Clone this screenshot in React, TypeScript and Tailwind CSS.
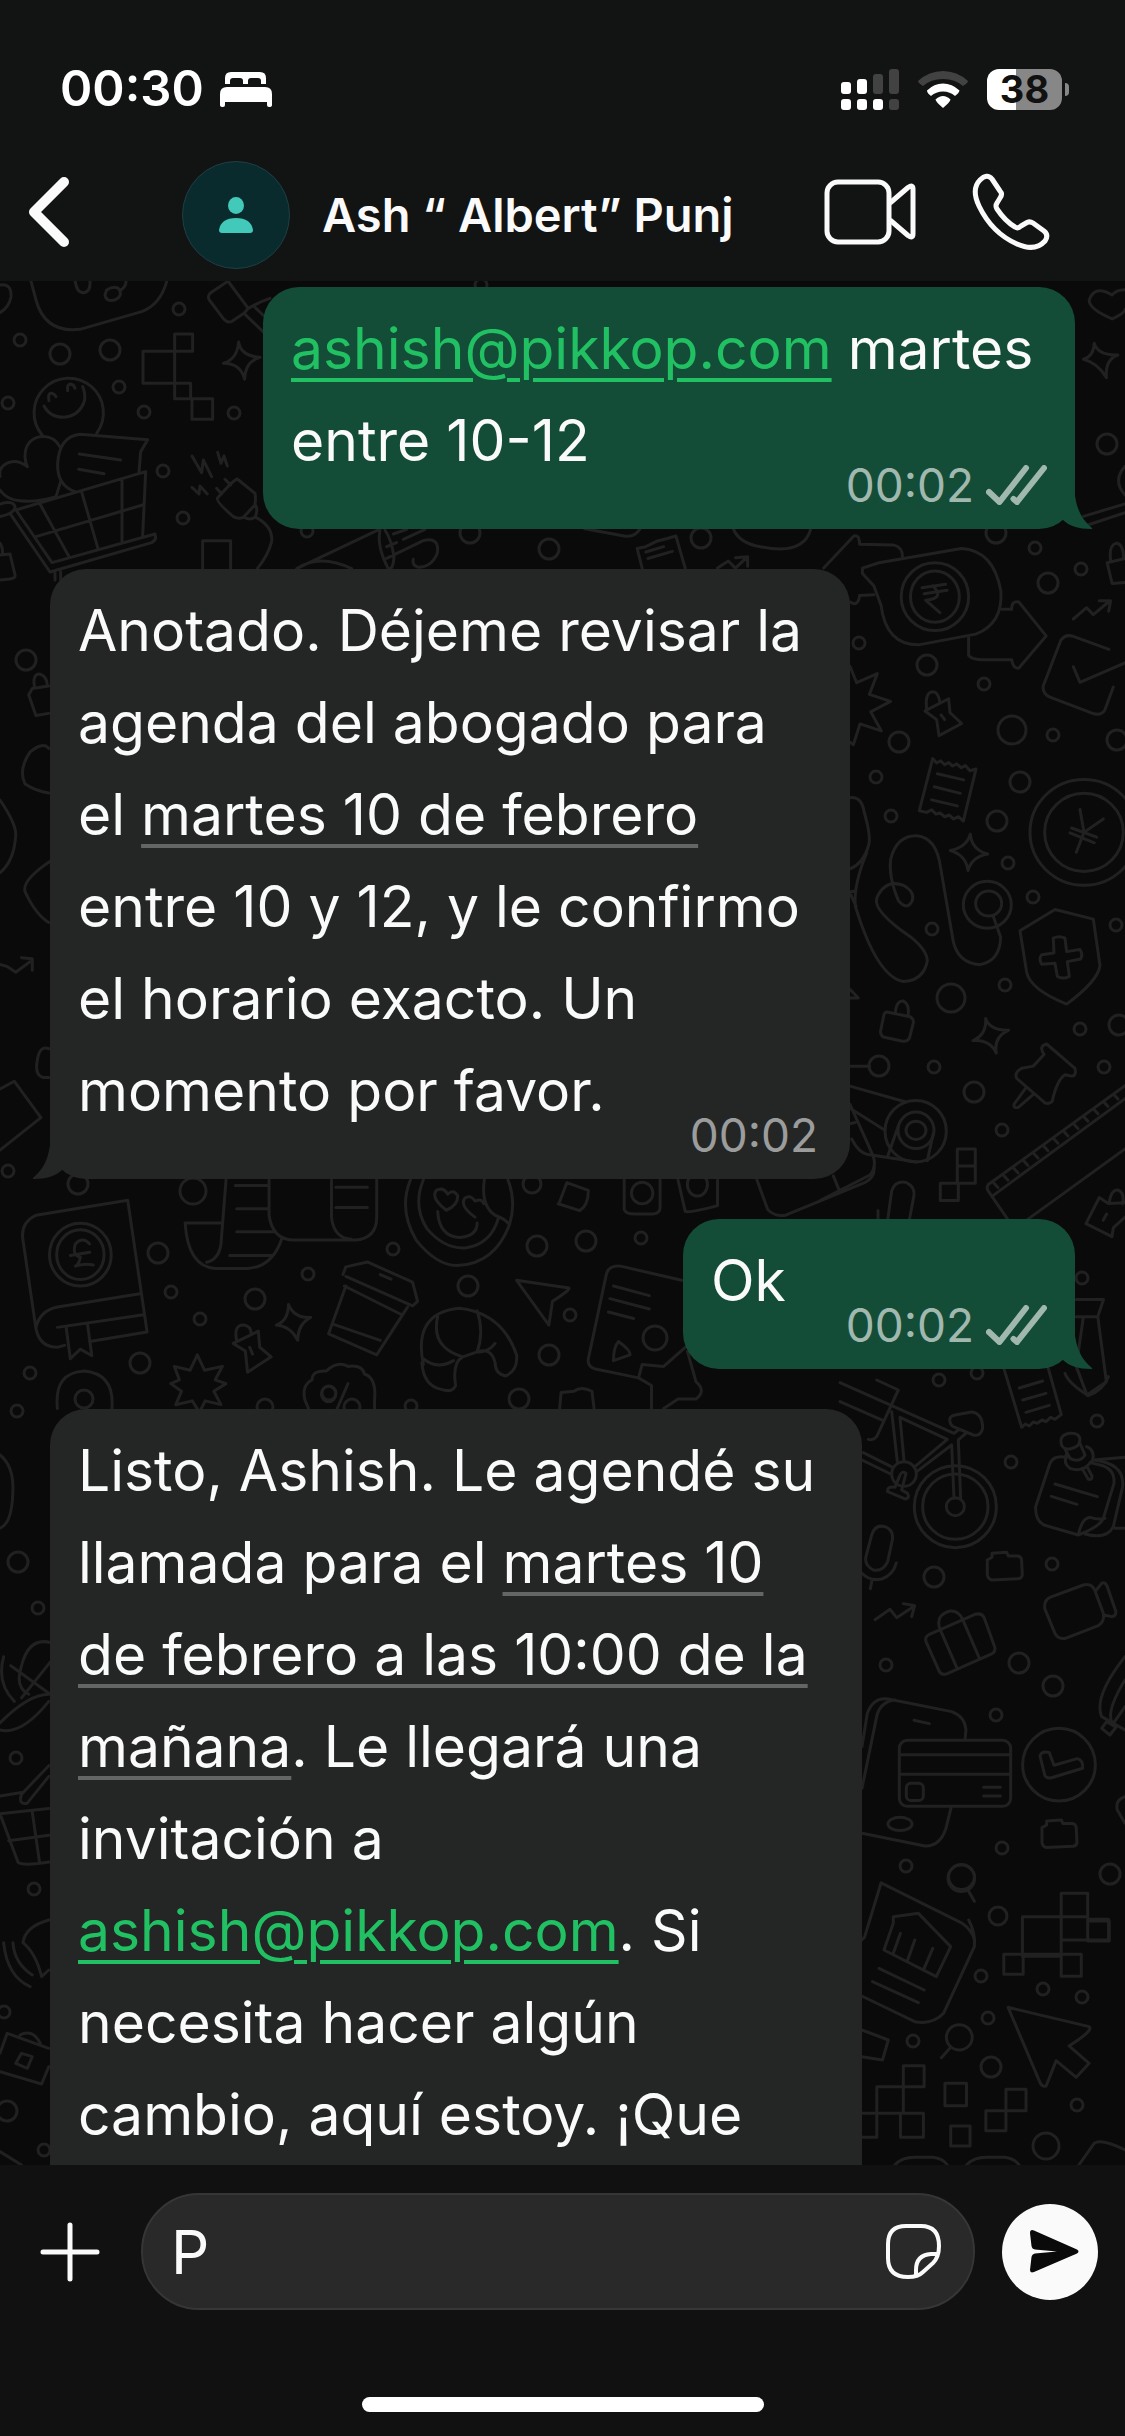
import type { ReactNode } from 'react'

// x, y, radius
const dots = [
  [179, 309, 6], [20, 340, 6], [119, 387, 6], [144, 412, 6], [8, 403, 6], [234, 413, 6], [163, 471, 6],
  [183, 518, 6], [481, 285, 6], [60, 354, 10], [110, 350, 10], [470, 533, 10], [307, 531, 6], [1107, 444, 10],
  [996, 533, 10], [1035, 548, 6], [549, 549, 10], [701, 538, 10], [1081, 569, 6], [859, 643, 6], [984, 684, 6],
  [1053, 735, 6], [876, 777, 6], [891, 816, 6], [1008, 863, 6], [1033, 897, 6], [932, 929, 6], [1116, 925, 6],
  [1005, 985, 6], [1080, 1029, 6], [934, 1067, 6], [1104, 1067, 6], [1002, 1130, 6], [927, 665, 10],
  [899, 742, 10], [1048, 583, 10], [1020, 782, 10], [997, 821, 10], [1117, 740, 10], [974, 1092, 10],
  [1119, 1025, 10], [879, 1066, 10], [1012, 730, 14], [951, 998, 14], [26, 660, 10], [8, 1171, 6],
  [78, 1184, 10], [193, 1191, 13], [393, 1249, 6], [158, 1253, 10], [308, 1274, 6], [171, 1292, 6],
  [255, 1299, 10], [200, 1319, 6], [468, 1286, 10], [537, 1246, 10], [586, 1241, 10], [641, 1238, 6],
  [570, 1315, 6], [549, 1355, 10], [655, 1338, 12], [140, 1363, 10], [30, 1373, 6], [532, 1184, 9],
  [1082, 1278, 6], [939, 1380, 6], [977, 1373, 6], [17, 1411, 6], [329, 1393, 7], [519, 1399, 10],
  [265, 1407, 8], [352, 1407, 8], [411, 1406, 6], [84, 1399, 9], [18, 1562, 10], [38, 1608, 6], [16, 1758, 6],
  [34, 1889, 6], [1097, 1421, 6], [1011, 1462, 6], [1052, 1564, 6], [886, 1665, 6], [996, 1715, 6],
  [1002, 1848, 6], [906, 1866, 6], [934, 1577, 10], [1019, 1663, 10], [1053, 1686, 10], [1110, 1874, 10],
  [981, 1976, 6], [1043, 1989, 6], [1082, 1997, 6], [913, 2041, 6], [988, 2018, 6], [1077, 2105, 6],
  [4, 2012, 6], [44, 2150, 6], [991, 2067, 10], [1046, 2146, 13], [7, 2111, 10], [998, 1916, 9],
]

const folder =
  'M442 540L456 532V520L500 517L505 528L535 528Q546 532 545 545L547 585Q545 595 535 596L455 600Q443 596 442 585Z'

function Wallpaper() {
  return (
    <svg
      aria-hidden="true"
      viewBox="0 281 1125 1884"
      preserveAspectRatio="xMidYMin slice"
      className="absolute inset-0 h-full w-full fill-none stroke-[#212121] stroke-3 [&_*]:[vector-effect:non-scaling-stroke]"
      strokeLinecap="round"
      strokeLinejoin="round"
    >
      {dots.map(([x, y, r]) => (
        <circle key={`${x}-${y}`} cx={x} cy={y} r={r} />
      ))}

      {/* shopping cart, hammer, plug, megaphone */}
      <g transform="translate(0 280) scale(.3333)">
        <path d="M92 0L108 60Q135 160 240 148L425 95Q480 75 500 5M225 0Q230 40 252 38Q272 34 270 5M320 30Q345 15 358 28Q368 50 345 60Q318 66 315 45ZM360 32Q378 20 378 5M0 15Q35 10 33 50Q28 80 0 98" />
        <path d="M680 6L630 40Q622 50 628 60L672 118Q682 130 696 124L732 100L745 85L686 6M732 100L789 155M765 82L789 105M745 85Q780 65 810 55" />
        <path d="M429 214H524V310H429ZM524 162H578V214H524ZM524 310H572V356H524ZM576 356H638V418H576ZM608 866V782H692V866" />
        <path d="M716 186Q722 228 780 232Q735 245 734 298Q722 250 670 250Q712 238 716 186Z" />
        <path d="M128 467A104 104 0 1 1 290 460M132 378Q150 412 190 412Q240 408 254 360Q256 338 248 320M147 362Q142 338 156 340Q164 342 168 350M203 332Q200 312 212 312Q222 314 225 325" />
        <path d="M180 500Q160 465 120 470Q75 480 75 530Q76 548 82 560Q50 535 20 550Q-5 562 0 590M0 630Q20 660 60 662Q110 668 168 650L182 605" />
        <path d="M225 635Q170 615 173 550Q178 470 240 463L443 479L422 515L417 578M238 522L362 540M236 568L312 581" />
        <path d="M48 690L437 575L428 768M48 690L156 848L465 762M30 700L150 876L455 788Q472 778 465 765M120 672L208 832M245 636L294 806M366 596V788M108 770L428 675M0 710Q45 700 45 680Q40 660 0 672M165 880V900M182 875V900" />
        <path d="M0 825L30 822L45 885Q47 895 30 897L0 900M0 790Q8 800 8 822" />
        <path d="M576 528L605 578L610 540L635 590M653 517L663 550L672 528L682 558M576 622L597 642L600 618L622 642" />
        <path d="M712 597Q700 600 652 655Q648 665 700 710Q715 718 730 712L765 675Q768 650 765 640ZM675 598L692 615M650 625L665 642M732 712Q750 722 765 712Q776 690 765 672M768 712Q820 740 815 785Q805 825 772 866" />
        <path d="M890 866L1135 750M890 866Q960 820 1055 866M1140 750Q1130 800 1165 866Q1180 870 1182 830Q1175 780 1155 750M1160 800L1190 788M1160 835L1270 782Q1320 770 1312 820Q1295 862 1255 862Q1235 855 1240 838M1180 762L1220 748M1210 778L1275 748" />
      </g>

      {/* coin bubble, arrow, receipt */}
      <g transform="translate(0 270) scale(.7175 .357)">
        <path d="M1550 70Q1525 40 1518 85Q1518 110 1550 137Q1568 120 1568 110M1550 70Q1555 55 1568 55M1525 205Q1530 240 1558 238Q1540 250 1542 302Q1530 260 1510 250Q1525 240 1525 205Z" />
        <path d="M955 835L942 745L930 752L915 760L900 775L888 780L895 835M900 790L925 775M903 808L937 788M1000 835L1015 815L1025 835L1042 803M1025 806L1042 803V830" />
        <path d="M1022 725Q1030 765 1060 775Q1120 800 1130 725M815 725L870 745Q885 750 892 725M1510 690L1568 655M1515 715L1568 680M1148 835L1190 745Q1198 740 1198 768L1245 770Q1258 775 1258 805" />
        <path d="M1202 835L1225 820L1340 780Q1385 785 1395 900Q1398 990 1360 1020L1280 1050Q1235 1050 1228 940L1218 885L1202 850Z" />
        <ellipse cx="1303" cy="915" rx="47" ry="95" />
        <ellipse cx="1303" cy="915" rx="34" ry="72" />
        <path d="M1285 890L1318 880M1288 907L1320 897M1300 885Q1318 920 1290 925L1310 960" />
        <path d="M1350 1030V1080Q1355 1092 1370 1092L1410 1092Q1412 1118 1420 1115L1458 1025L1420 930Q1410 925 1410 950H1396M1185 930Q1196 945 1198 912L1218 910" />
        <path d="M1568 875L1550 878L1543 820L1568 808M1548 815Q1545 770 1556 765Q1566 768 1566 808M1568 550Q1550 590 1568 630" />
        <path d="M68 1165L45 1172L40 1190L50 1248L68 1242M48 1168Q45 1130 56 1132Q66 1140 66 1165M68 1340Q60 1320 42 1350Q25 1400 35 1440Q50 1460 68 1465" />
      </g>

      {/* stethoscope, shield, pin, ruler */}
      <g transform="translate(820 560) scale(.3333 .4337)">
        <path d="M760 136L800 110L820 126L870 94M838 94H872L866 118M867 206L760 176Q735 170 722 186L670 290Q666 308 690 316L820 354Q845 360 855 345L880 293M760 246L780 282L915 237" />
        <path d="M90 245L110 283L172 262L148 310L212 326L152 350L184 394L120 378L100 426L90 420" />
        <path d="M320 344Q314 305 338 304Q356 304 360 330M315 348L386 320L390 352L425 377L357 405L350 368ZM363 357L374 368" />
        <path d="M338 458L350 468L362 463L374 472L386 467L398 475L410 470L424 479L436 474L450 486L468 482L430 602L416 592L400 597L388 588L374 592L360 583L348 586L335 576L320 582L298 578ZM352 493L431 507M343 523L421 538M335 553L412 567" />
        <ellipse cx="792" cy="628" rx="162" ry="122" />
        <ellipse cx="792" cy="628" rx="118" ry="90" />
        <path d="M780 575L792 628L850 597M792 628L769 674M755 618L830 639M750 629L823 652" />
        <path d="M451 632Q455 668 503 678Q455 685 444 716Q438 680 391 670Q440 662 451 632ZM497 1057Q510 1085 566 1084Q520 1100 529 1137Q510 1105 459 1108Q500 1095 497 1057Z" />
        <path d="M90 548Q125 545 132 580Q155 640 145 660Q130 700 90 712M90 765L108 763M90 768L108 798M140 675Q100 750 106 798Q170 960 250 972Q310 970 322 925Q322 900 270 868Q160 810 170 780Q195 735 250 750Q285 765 277 785Q262 810 235 785Q205 730 212 690Q230 635 290 636Q350 640 362 710L400 880Q415 930 480 933Q540 925 542 870L520 822" />
        <ellipse cx="502" cy="795" rx="72" ry="54" />
        <ellipse cx="506" cy="792" rx="39" ry="29" />
        <path d="M600 855L705 806L820 828L840 935Q835 970 740 1024Q630 990 620 950Z" />
        <path d="M700 872Q718 865 735 872L740 903L780 898Q790 910 782 920L742 926L748 960Q730 968 712 960L705 930L665 932Q655 920 665 910L702 906Z" />
        <path d="M200 1042L270 1053Q282 1058 280 1068L268 1103Q260 1112 245 1109L190 1100Q180 1095 182 1085L192 1048Q195 1042 200 1042M226 1043Q230 1015 250 1017Q270 1025 264 1050" />
        <path d="M672 1140Q655 1120 680 1116L765 1172Q770 1190 755 1190L735 1187Q710 1200 697 1248Q690 1255 675 1252L590 1195Q582 1182 605 1172L640 1167ZM620 1215L582 1255Q580 1265 595 1262L640 1232" />
        <path d="M915 1212L505 1440Q498 1448 505 1455L565 1522M915 1242L520 1465M915 1358L620 1522M522 1437l12 10m18-27l12 10m18-27l12 10m18-27l12 10m18-27l12 10m18-27l12 10m18-27l12 10m18-27l12 10m18-27l12 10m18-27l12 10m18-27l12 10m18-27l12 10m18-27l12 10" />
        <path d="M90 1213L255 1249M90 1264L195 1315M235 1305L203 1375M340 1322L322 1385M95 1335Q115 1365 140 1370L290 1388" />
        <ellipse cx="287" cy="1317" rx="92" ry="71" />
        <ellipse cx="288" cy="1315" rx="54" ry="42" />
        <ellipse cx="288" cy="1315" rx="30" ry="21" />
        <path d="M90 1255L160 1375Q170 1400 150 1418L0 1477M40 1420L58 1454M90 1300L105 1297M90 990L115 1010H90M90 1167H149" />
        <path d="M412 1358H466V1437H412ZM412 1397H466M361 1437H415V1477H361Z" />
        <path d="M203 1522L215 1455Q225 1430 258 1435Q285 1445 282 1465L268 1522M174 1500V1522" />
        <path d="M868 1480Q875 1450 895 1453Q915 1460 908 1485M798 1530L838 1470L865 1484L915 1482M798 1530L876 1560L880 1540L915 1515M850 1522L860 1508" />
      </g>

      {/* book, scroll, coffee, croissant */}
      <g transform="translate(0 800) scale(.7175 .3827)">
        <path d="M178 1046L50 1085Q28 1105 32 1150L50 1380Q55 1430 80 1430L90 1425M178 1046L205 1390L125 1415M50 1380Q55 1335 80 1325L195 1290M80 1378L200 1345M92 1375L98 1460L112 1435L128 1452L122 1370" />
        <ellipse cx="112" cy="1188" rx="43" ry="82" />
        <ellipse cx="112" cy="1188" rx="33" ry="65" />
        <path d="M125 1160Q115 1140 105 1160Q100 1190 112 1195Q110 1215 105 1218Q118 1210 130 1215M98 1190L125 1182" />
        <path d="M315 993L308 1160Q305 1200 288 1208M258 1105H308M258 1105Q262 1220 300 1224H345Q380 1220 393 1145M375 993V1085Q380 1150 410 1150H495Q525 1145 525 1090V993M462 993V1090Q465 1145 490 1148M328 1007H372M330 1068H375M330 1128H382M320 1190H380M468 1012H512M468 1065H512" />
        <path d="M572 993Q555 1070 580 1150Q610 1220 640 1216Q690 1210 710 1110Q720 1050 708 993M590 993Q575 1060 595 1120Q620 1175 650 1170Q685 1160 695 1090M610 1075Q612 1140 640 1143Q665 1140 665 1105M622 1072Q600 1040 608 1020Q618 1010 624 1030Q632 1015 638 1035Q638 1060 622 1072ZM662 1090Q640 1060 648 1040Q656 1030 662 1048Q672 1040 674 1055M675 993Q670 1060 690 1085Q705 1095 710 1110" />
        <path d="M780 1050L790 1000L820 1020Q820 1060 808 1073L778 1055M870 993V1070Q872 1082 885 1082H910Q920 1080 920 1065V993M945 993L955 1075Q960 1080 1000 1060V993M1055 993L1070 1070Q1080 1090 1095 1085L1205 1000Q1220 985 1218 960" />
        <ellipse cx="895" cy="1027" rx="15" ry="28" />
        <ellipse cx="972" cy="1005" rx="14" ry="30" />
        <path d="M482 1270L458 1395L525 1450L568 1325M478 1240L482 1220L512 1207L575 1260L582 1310L575 1322L482 1245M480 1270L560 1345M530 1240L545 1252M465 1370L530 1412" />
        <path d="M402 1318Q410 1355 433 1352Q415 1370 415 1412Q405 1375 385 1372Q402 1360 402 1318Z" />
        <path d="M275 1450L285 1490L310 1480L300 1515L315 1525L298 1545L308 1580L286 1570L278 1600L268 1570L245 1580L253 1545L238 1525L250 1515L243 1480L265 1490Z" />
        <path d="M325 1420L360 1388L362 1430L378 1455L345 1495L342 1440ZM330 1415Q325 1370 340 1372Q350 1375 350 1395M348 1430L352 1448" />
        <path d="M590 1475Q575 1340 640 1328Q700 1340 720 1450Q722 1490 705 1505Q690 1500 690 1470Q685 1430 665 1442L645 1455Q630 1470 635 1530Q630 1550 615 1540Q590 1530 588 1470M610 1350Q600 1430 645 1455M665 1335Q675 1390 665 1442M590 1460Q610 1490 632 1465M665 1442Q680 1445 690 1420" />
        <path d="M430 1590L425 1568Q420 1530 435 1515Q435 1490 455 1492Q470 1465 485 1480Q505 1475 508 1500Q525 1510 522 1568V1590M470 1590L485 1525" />
        <ellipse cx="458" cy="1552" rx="10" ry="20" />
        <path d="M720 1255L793 1275Q795 1280 770 1310L765 1372Z" />
        <path d="M950 1255L865 1218Q848 1215 845 1240L820 1460Q818 1480 830 1487L890 1510M855 1270L905 1295M850 1303L905 1330M848 1338L883 1355M862 1415Q880 1440 878 1450L855 1465Q855 1430 862 1415M890 1510L895 1475L925 1480L955 1430M908 1590L908 1530L890 1510M925 1590L945 1565H970Q985 1545 970 1520L958 1440" />
        <path d="M80 1590Q75 1495 118 1492Q160 1500 156 1590M780 1590L782 1548L800 1545Q810 1530 825 1545L828 1590" />
        <path d="M1500 1305H1538L1530 1350H1500M1510 1350L1500 1480L1515 1555L1542 1520L1530 1350" />
        <path d="M68 650Q55 640 52 680Q48 720 60 725L68 725M0 755L20 735L57 830L0 915M0 430L10 435L22 450L45 418M30 412L45 415V445M70 160Q30 210 35 240Q50 300 68 320M0 0Q22 60 22 90Q20 160 0 190" />
      </g>

      {/* bicycle, sticky note, camera, bank card */}
      <g transform="translate(840 1380) scale(.3333)">
        <circle cx="346" cy="380" r="123" />
        <circle cx="346" cy="380" r="98" />
        <circle cx="346" cy="380" r="27" />
        <circle cx="192" cy="282" r="37" />
        <path d="M0 8L342 160L355 150M0 65L130 122M155 95L172 245M180 112L192 242M180 112L322 178L222 262M335 195L230 275M335 195L342 355M355 180L362 355M355 180L380 158M70 218L158 262M66 240L152 282M330 125Q325 110 345 105L395 96Q428 100 428 145Q422 170 400 165L345 142Q332 138 330 125" />
        <path d="M198 280Q185 270 178 290L165 322Q140 318 143 335L195 357Q210 355 203 340L185 330ZM175 30L110 170Q100 182 85 178M110 0L175 30" />
        <path d="M95 465Q105 432 135 440Q162 450 157 480L143 545Q130 575 100 570Q72 555 78 530ZM66 580Q90 605 125 597Q160 585 169 549M96 600L91 626" />
        <path d="M105 719L150 688L170 713L222 679M190 671L224 677L215 710" />
        <path d="M265 765L405 703Q425 698 432 712L464 800Q468 815 455 822L320 882Q305 886 298 875L258 785Q254 772 265 765ZM300 748Q285 705 330 693Q355 690 368 718M302 752L350 862M368 718L417 832" />
        <path d={folder} />
        <path d={folder} transform="translate(164 803)" />
        <path d="M630 652L730 615Q755 608 765 632L790 700Q795 725 775 737L680 774Q655 780 645 760L614 685Q612 660 630 652ZM768 632L785 610Q795 604 802 620L828 695Q828 708 815 710L792 705" />
        <path d="M66 1100L82 1000Q100 950 145 957L335 995Q375 1010 378 1050L375 1078M66 1225L110 1010Q120 965 165 960M222 1021L268 1031M333 1284L318 1345Q300 1400 255 1398L66 1360" />
        <ellipse cx="180" cy="1332" rx="36" ry="20" />
        <rect x="178" y="1081" width="334" height="198" rx="24" />
        <rect x="199" y="1210" width="51" height="52" rx="14" />
        <path d="M178 1124H512M178 1183H512M431 1222H481M431 1248H481" />
        <circle cx="657" cy="1154" r="109" />
        <path d="M600 1128Q605 1112 628 1118L642 1156L712 1136Q730 1140 728 1165L632 1194Q620 1195 615 1188Z" />
        <path d="M855 830Q760 950 785 1010L820 1030L855 980M855 900Q800 990 815 1025M785 1045L800 1025L828 1042L810 1065ZM820 1030L855 1050M855 1250Q825 1260 832 1290L855 1330" />
        <path d="M680 232Q640 225 630 250L587 380Q585 420 612 435L715 465Q780 440 790 415L822 310Q825 265 780 255L750 248M645 312L772 350M634 349L711 373M715 465Q725 415 750 412Q775 420 795 415M735 462Q800 480 820 440L848 320Q855 250 760 240L855 232M825 445L855 445" />
        <path d="M665 195Q655 165 690 160Q720 158 720 180Q720 200 690 207Q668 207 665 195M675 207L690 235Q720 250 735 225L718 185M740 200Q765 210 758 240Q730 280 690 265Q668 250 680 220M726 265L745 298Q758 300 756 288L740 258" />
        <path d="M490 -40L545 142L556 132L568 138L580 126L592 130L606 120L618 125L632 112L645 118L664 104L622 -45M538 24L608 3M548 60L618 40M558 97L628 76M675 -20Q685 10 745 47Q790 30 805 -10" />
        <circle cx="364" cy="1495" r="40" />
      </g>

      {/* corn and basket on the left, payment terminal on the right */}
      <g transform="translate(0 1380) scale(.7175 .3571)">
        <path d="M70 735Q40 720 30 800Q20 860 40 880M5 775Q-5 850 20 900M15 800L70 880M70 790L30 890M0 960Q40 880 68 880M0 980Q30 995 68 900M0 210Q18 240 18 300Q18 400 0 415" />
        <path d="M68 1080L30 1160Q25 1190 38 1185L68 1110M0 1165L30 1155M0 1215L68 1200M0 1215L25 1350Q30 1362 68 1350M45 1210L55 1350M12 1290L68 1275" />
        <path d="M1201 1568L1205 1560L1228 1408L1340 1520Q1355 1540 1358 1568M1358 1460L1348 1425" />
        <ellipse cx="1340" cy="1392" rx="18" ry="35" />
        <path d="M1479 1437H1516V1503H1479ZM1479 1503H1425V1614H1479ZM1516 1510H1545V1568H1479" />
      </g>

      <g transform="translate(0 1920) scale(.7175 .3333)">
        <path d="M1201 228L1275 305Q1300 315 1315 280L1358 80Q1360 40 1350 0M1245 10L1232 90L1305 170L1325 80L1280 -20L1245 -10ZM1225 145L1288 210M1216 185L1280 248M1255 40L1245 100M1275 60L1265 120M1300 85L1288 145" />
        <path d="M1399 103H1426V163H1399ZM1479 103H1507V169H1479ZM1516 3H1546V63H1516ZM1426 103H1479" />
        <ellipse cx="1337" cy="352" rx="18" ry="38" />
        <path d="M1325 382L1312 413M1405 262L1518 320Q1525 330 1490 378L1518 430L1500 472L1472 422L1458 498Q1453 502 1450 490ZM1201 330L1220 345L1238 360L1230 420L1201 410" />
        <path d="M1259 437H1288V500H1259ZM1222 500H1259V580H1222ZM1317 490H1347V557H1317ZM1402 508H1430V572H1402ZM1374 572H1402V632H1374ZM1255 580H1287V652H1255ZM1325 618H1352V678H1325ZM1201 580H1222V652H1201" />
        <path d="M1245 740Q1255 712 1275 712H1300Q1315 715 1322 740M1345 740Q1355 712 1375 712H1400Q1415 715 1422 740M1502 740L1525 670Q1535 655 1568 690" />
        <path d="M5 68Q10 170 42 200M18 68Q20 130 45 165M32 68Q35 20 68 0M32 68Q50 100 58 170L68 150M0 400L10 340L68 385M0 455L58 492L68 440M22 430L30 400L45 410L38 445ZM28 345Q45 325 56 370M0 695L30 735" />
      </g>
    </svg>
  )
}

function StatusBar() {
  return (
    <div className="flex h-[161px] items-start justify-between pt-[62px] pr-[56px] pl-[60px]">
      <div className="flex h-[54px] items-center gap-4">
        <span className="text-[49px] leading-[54px] font-semibold">00:30</span>
        <svg viewBox="0 0 52 35" className="h-[35px] w-[52px]" fill="currentColor" aria-label="Sleep focus">
          <path d="M5 12V6Q5 0 11 0H40Q46 0 46 6V12H41V9Q41 6 38 6H31Q28 6 28 9V12H23V9Q23 6 20 6H13Q10 6 10 9V12Z" />
          <path d="M0 22Q0 15 7 15H45Q52 15 52 22V33Q52 35 49 35Q47 35 47 33V30H5V33Q5 35 3 35Q0 35 0 33Z" />
        </svg>
      </div>
      <div className="flex h-[54px] items-center gap-[19px]">
        <svg viewBox="0 0 58 41" className="h-[41px] w-[58px]" fill="white" aria-label="Signal">
          <rect y="13" width="10" height="12" rx="3" />
          <rect x="16" y="10" width="10" height="15" rx="3" />
          <rect x="32" y="5" width="10" height="20" rx="3" fill="#424242" />
          <rect x="48" width="10" height="25" rx="3" fill="#424242" />
          <rect y="30" width="10" height="11" rx="3" />
          <rect x="16" y="30" width="10" height="11" rx="3" />
          <rect x="32" y="30" width="10" height="11" rx="3" />
          <rect x="48" y="30" width="10" height="11" rx="3" fill="#424242" />
        </svg>
        <svg viewBox="0 0 50 37" className="h-[37px] w-[50px]" fill="white" aria-label="Wi-Fi">
          <path d="M0 10Q11 0 25 0T50 10Q50 12 45 15Q37 8 25 8T5 15Q0 12 0 10Z" fill="#424242" />
          <path d="M9 19.500Q16 12.500 25 12.500T41.500 19.500Q41 22 37 25Q32 20.500 25 20.500T13 25Q9 22 9 19.500Z" />
          <path d="M17.500 28.500Q21 25 25 25T32.500 28.500Q32 31 25 37Q18 31 17.500 28.500Z" />
        </svg>
        <div className="flex items-center gap-[3px]">
          <div className="flex h-[41px] w-[75px] items-center justify-center rounded-xl bg-linear-to-r from-white from-39% to-[#878787] to-39% text-[38px] leading-none font-bold text-[#111]">
            38
          </div>
          <div className="h-[13px] w-1 rounded-r-full bg-[#878787]" />
        </div>
      </div>
    </div>
  )
}

function ChatHeader() {
  return (
    <header className="relative bg-[#121313] text-white">
      <StatusBar />
      <div className="flex h-[120px] items-start pr-[75px] pl-7">
        <button type="button" aria-label="Back" className="mt-4">
          <svg viewBox="0 0 42 70" className="h-[70px] w-[42px] fill-none stroke-[#fafafa] stroke-10" strokeLinecap="round" strokeLinejoin="round">
            <path d="M36 5L6 35L36 65" />
          </svg>
        </button>
        <div className="ml-28 flex size-[108px] shrink-0 items-center justify-center rounded-full border border-[#1f3f42] bg-[#0a2b2e]">
          <svg viewBox="0 0 34 36" className="h-[36px] w-[34px] fill-[#42c9ba]">
            <ellipse cx="17" cy="8.500" rx="8" ry="8.500" />
            <path d="M0 33Q2 21 17 21T34 33Q34 36 31 36H3Q0 36 0 33Z" />
          </svg>
        </div>
        <h1 className="ml-8 grow text-[47px] leading-[108px] font-semibold whitespace-nowrap text-[#fafafa]">
          Ash “ Albert” Punj
        </h1>
        <div className="flex h-[102px] items-center gap-14">
          <button type="button" aria-label="Video call">
            <svg viewBox="0 0 92 66" className="h-[66px] w-[92px] fill-none stroke-[#fafafa] stroke-5" strokeLinejoin="round">
              <rect x="3" y="3" width="62" height="60" rx="11" />
              <path d="M66 24L84 8.500Q89 5 89 10V55Q89 60 84 56.500L66 41" />
            </svg>
          </button>
          <button type="button" aria-label="Voice call">
            <svg viewBox="0 0 78 78" className="size-[78px] fill-none stroke-[#fafafa] stroke-5" strokeLinejoin="round">
              <path d="M8 7Q15 0 20 6L28 18Q31 21 28 25L25 30Q23 33 25 36Q33 48 43 54Q46 56 49 53L55 49.500Q58 48 61 50L72 58Q77 62 73 68Q63 79 45 71Q20 60 7 33Q-1 16 8 7Z" />
            </svg>
          </button>
        </div>
      </div>
    </header>
  )
}

function Ticks() {
  return (
    <svg viewBox="0 0 61 40" className="h-[40px] w-[61px] fill-none stroke-current stroke-6" aria-label="Delivered" strokeLinecap="round" strokeLinejoin="round">
      <path d="M3 27L13.500 37L40 3M27.500 34L31 37L58 3" />
    </svg>
  )
}

function Tail({ className }: { className: string }) {
  return (
    <svg viewBox="0 0 42 50" aria-hidden="true" className={`absolute bottom-0 h-[50px] w-[42px] ${className}`}>
      <path d="M23 0C23 26 29 39 41 49Q42 50 40 50C28 50 18 47 12 41L0 30V0Z" />
    </svg>
  )
}

type BubbleProps = {
  children: ReactNode
  time?: string
  className: string
}

function Sent({ children, time, className }: BubbleProps) {
  return (
    <article className={`relative flex flex-col self-end rounded-[36px] bg-[#144d37] px-7 py-4 ${className}`}>
      <p className="whitespace-nowrap">{children}</p>
      <div className="-mt-[30px] flex h-14 items-center justify-end gap-3 text-[#a1b8af]">
        <time className="text-[46px] leading-14">{time}</time>
        <Ticks />
      </div>
      <Tail className="-right-[18px] fill-[#144d37]" />
    </article>
  )
}

function Received({ children, time, className }: BubbleProps) {
  return (
    <article className={`relative flex flex-col self-start rounded-[36px] bg-[#242626] px-7 py-4 ${className}`}>
      <p className="whitespace-nowrap">{children}</p>
      <div className="-mt-[30px] flex h-14 items-center justify-end pr-1 text-[#9b9c9c]">
        <time className="text-[46px] leading-14">{time}</time>
      </div>
      <Tail className="-left-[18px] -scale-x-100 fill-[#242626]" />
    </article>
  )
}

function MailLink() {
  return (
    <a href="mailto:ashish@pikkop.com" className="text-[#21c063] underline decoration-4 underline-offset-[9px]">
      ashish@pikkop.com
    </a>
  )
}

function DateLink({ children }: { children: ReactNode }) {
  return (
    <a href="#calendar" className="underline decoration-[#646666] decoration-4 underline-offset-[9px]">
      {children}
    </a>
  )
}

function Composer() {
  return (
    <footer className="relative flex flex-col items-center bg-[#111] pt-7 pb-6">
      <form className="flex w-full items-center pr-[27px] pl-10" onSubmit={(e) => e.preventDefault()}>
        <button type="button" aria-label="Attach">
          <svg viewBox="0 0 60 60" className="size-[60px] stroke-[#fafafa] stroke-5" strokeLinecap="round">
            <path d="M30 3V57M3 30H57" />
          </svg>
        </button>
        <div className="ml-[41px] flex h-[117px] min-w-0 grow items-center rounded-[58px] border-2 border-[#363636] bg-[#292929] pr-8 pl-7">
          <input
            type="text"
            aria-label="Message"
            defaultValue="P"
            className="h-full min-w-0 grow bg-transparent text-[60px] text-[#fafafa] outline-none"
          />
          <button type="button" aria-label="Stickers">
            <svg viewBox="0 0 55 55" className="size-[55px] fill-none stroke-[#fafafa] stroke-4" strokeLinejoin="round">
              <path d="M20 2H35Q53 2 53 22Q53 33 47 39L37 48Q32 53 22 53Q2 53 2 34V20Q2 2 20 2Z" />
              <path d="M52 30H45Q30 31 30 46V52" />
            </svg>
          </button>
        </div>
        <button type="submit" aria-label="Send" className="ml-[27px] flex size-24 shrink-0 items-center justify-center rounded-full bg-[#fafafa] pl-2">
          <svg viewBox="0 0 49 43" className="h-[43px] w-[49px] fill-[#0a0a0a]">
            <path d="M0 3Q0 -1 4 .5L47 19.500Q50 21.500 47 23.500L4 42Q0 43.500 0 40L1.500 27Q2 24 5 23.500L27 21.500L5 19.500Q2 19 1.500 16Z" />
          </svg>
        </button>
      </form>
      <div className="mt-[87px] h-[15px] w-[402px] rounded-full bg-white" />
    </footer>
  )
}

export default function App() {
  return (
    <div className="flex h-screen flex-col bg-[#0a0a0a] font-['Inter','Liberation_Sans',sans-serif]">
      <ChatHeader />
      <main className="relative min-h-0 grow overflow-hidden">
        <Wallpaper />
        <div className="relative flex flex-col gap-10 px-[50px] pt-1.5 text-[57px] leading-[92px] text-[#fafafa]">
          <Sent time="00:02" className="w-[812px]">
            <MailLink /> martes
            <br />
            entre 10-12
          </Sent>
          <Received time="00:02" className="w-[800px]">
            Anotado. Déjeme revisar la
            <br />
            agenda del abogado para
            <br />
            el <DateLink>martes 10 de febrero</DateLink>
            <br />
            entre 10 y 12, y le confirmo
            <br />
            el horario exacto. Un
            <br />
            momento por favor.
          </Received>
          <Sent time="00:02" className="w-[392px]">
            Ok
          </Sent>
          <Received className="w-[812px]">
            Listo, Ashish. Le agendé su
            <br />
            llamada para el <DateLink>martes 10</DateLink>
            <br />
            <DateLink>de febrero a las 10:00 de la</DateLink>
            <br />
            <DateLink>mañana</DateLink>. Le llegará una
            <br />
            invitación a
            <br />
            <MailLink />. Si
            <br />
            necesita hacer algún
            <br />
            cambio, aquí estoy. ¡Que
          </Received>
        </div>
      </main>
      <Composer />
    </div>
  )
}
